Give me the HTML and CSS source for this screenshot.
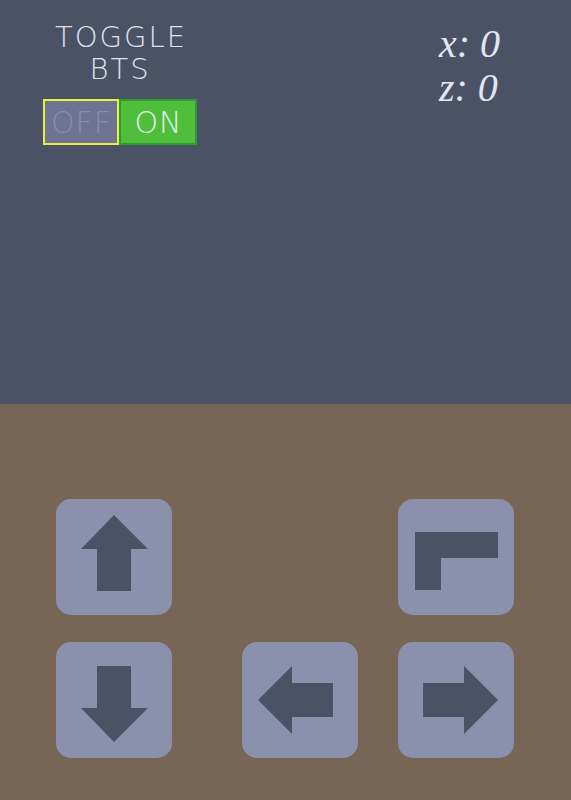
FILE: index.html
```html
<!DOCTYPE html>
<html>
<head>
<meta charset="utf-8">
<link rel="stylesheet" href="styles.css">
</head>
<body>
<div class="screen">
  <div class="sky">
    <div class="panel">
      <div class="title">TOGGLE<br>BTS</div>
      <div class="toggle">
        <div class="opt off">OFF</div>
        <div class="opt on">ON</div>
      </div>
    </div>
    <div class="coords">
      <div class="coord">x: 0</div>
      <div class="coord">z: 0</div>
    </div>
  </div>
  <div class="ground">
    <div class="pad">
      <div class="btn c1 r1"><svg viewBox="0 0 116 116"><polygon points="58,16 92,50 75,50 75,92 41,92 41,50 25,50"/></svg></div>
      <div class="btn c5 r1"><svg viewBox="0 0 116 116"><polygon points="17,33 100,33 100,59 43,59 43,91 17,91"/></svg></div>
      <div class="btn c1 r2"><svg viewBox="0 0 116 116"><polygon points="41,24 75,24 75,66 92,66 58,100 25,66 41,66"/></svg></div>
      <div class="btn c3 r2"><svg viewBox="0 0 116 116"><polygon points="16,58 50,24 50,41 91,41 91,75 50,75 50,92"/></svg></div>
      <div class="btn c5 r2"><svg viewBox="0 0 116 116"><polygon points="25,41 66,41 66,24 100,58 66,92 66,75 25,75"/></svg></div>
    </div>
  </div>
</div>
</body>
</html>
```
FILE: styles.css
```css
html, body {
  margin: 0;
  padding: 0;
}
body {
  width: 571px;
  height: 800px;
  overflow: hidden;
  background: #776655;
}
.screen {
  display: flex;
  flex-direction: column;
  height: 800px;
}
.sky {
  height: 404px;
  background: #4b5265;
  display: flex;
  justify-content: space-between;
  align-items: flex-start;
}
.panel {
  margin-left: 43px;
  margin-top: 21px;
  width: 154px;
  display: flex;
  flex-direction: column;
  align-items: center;
}
.title {
  font-family: "DejaVu Sans", sans-serif;
  font-weight: 200;
  font-size: 29px;
  line-height: 32px;
  letter-spacing: 2px;
  text-indent: 2px;
  color: #dfe2f2;
  text-align: center;
}
.toggle {
  margin-top: 14px;
  display: flex;
  height: 46px;
}
.opt {
  box-sizing: border-box;
  height: 46px;
  display: flex;
  align-items: center;
  justify-content: center;
  font-family: "DejaVu Sans", sans-serif;
  font-weight: 200;
  font-size: 30px;
  letter-spacing: 1px;
  text-indent: 1px;
}
.off {
  width: 76px;
  background: #6e7392;
  border: 2px solid #ecec44;
  color: #878ca9;
}
.on {
  width: 78px;
  background: #4fbe3b;
  border: 2px solid #2f9a30;
  color: #e4ecf2;
}
.coords {
  margin-top: 22px;
  margin-right: 71px;
  font-family: "Liberation Serif", serif;
  font-style: italic;
  font-size: 40px;
  line-height: 44px;
  color: #e2e5f4;
}
.ground {
  flex: 1;
  background: #776655;
}
.pad {
  margin-top: 95px;
  margin-left: 56px;
  display: grid;
  grid-template-columns: 116px 70px 116px 40px 116px;
  grid-template-rows: 116px 116px;
  row-gap: 27px;
}
.btn {
  width: 116px;
  height: 116px;
  border-radius: 15px;
  background: #8b91ac;
}
.btn svg {
  display: block;
  width: 116px;
  height: 116px;
  fill: #4b5265;
}
.c1 { grid-column: 1; }
.c3 { grid-column: 3; }
.c5 { grid-column: 5; }
.r1 { grid-row: 1; }
.r2 { grid-row: 2; }
```
